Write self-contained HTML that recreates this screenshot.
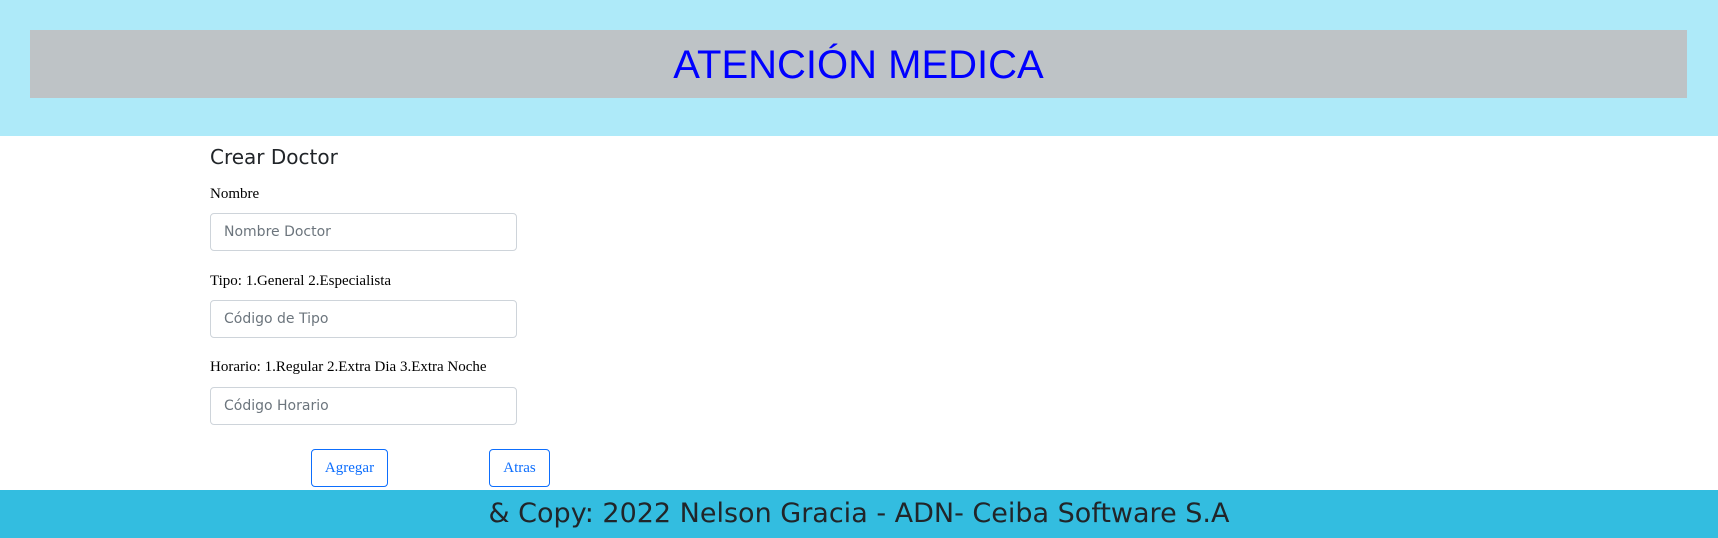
<!DOCTYPE html>
<html><head><meta charset="utf-8"><style>
*{box-sizing:border-box;margin:0;padding:0}
body{width:1718px;height:538px;overflow:hidden;background:#fff;position:relative;font-family:"Liberation Serif",serif}
.hdr{position:absolute;left:0;top:0;width:1718px;height:136px;background:#aeeaf9}
.bar{position:absolute;left:30px;top:30px;width:1657px;height:68px;background:#bec3c6;color:#0000ff;font-family:"Liberation Sans",sans-serif;font-size:40px;text-align:center;line-height:70px}
h2{position:absolute;left:210px;top:145px;font-family:"DejaVu Sans",sans-serif;font-weight:normal;font-size:20px;color:#212529}
.lbl{position:absolute;left:210px;font-size:15px;color:#000}
.inp{position:absolute;left:210px;width:307px;height:38px;border:1px solid #ced4da;border-radius:4px;font-family:"DejaVu Sans",sans-serif;font-size:14px;color:#6c757d;padding-left:13px;line-height:36px}
.btn{position:absolute;top:449px;height:38px;border:1px solid #0d6efd;border-radius:4px;color:#0d6efd;font-size:15px;text-align:center;line-height:36px}
.ftr{position:absolute;left:0;top:490px;width:1718px;height:48px;background:#33bde0;color:#212529;font-family:"DejaVu Sans",sans-serif;font-size:27px;text-align:center;line-height:48px}
</style></head><body>
<div class="hdr"><div class="bar">ATENCIÓN MEDICA</div></div>
<h2>Crear Doctor</h2>
<div class="lbl" style="top:186px">Nombre</div>
<div class="inp" style="top:213px">Nombre Doctor</div>
<div class="lbl" style="top:273px">Tipo: 1.General 2.Especialista</div>
<div class="inp" style="top:300px">Código de Tipo</div>
<div class="lbl" style="top:359px">Horario: 1.Regular 2.Extra Dia 3.Extra Noche</div>
<div class="inp" style="top:387px">Código Horario</div>
<div class="btn" style="left:311px;width:77px">Agregar</div>
<div class="btn" style="left:489px;width:61px">Atras</div>
<div class="ftr">&amp; Copy: 2022 Nelson Gracia - ADN- Ceiba Software S.A</div>
</body></html>
